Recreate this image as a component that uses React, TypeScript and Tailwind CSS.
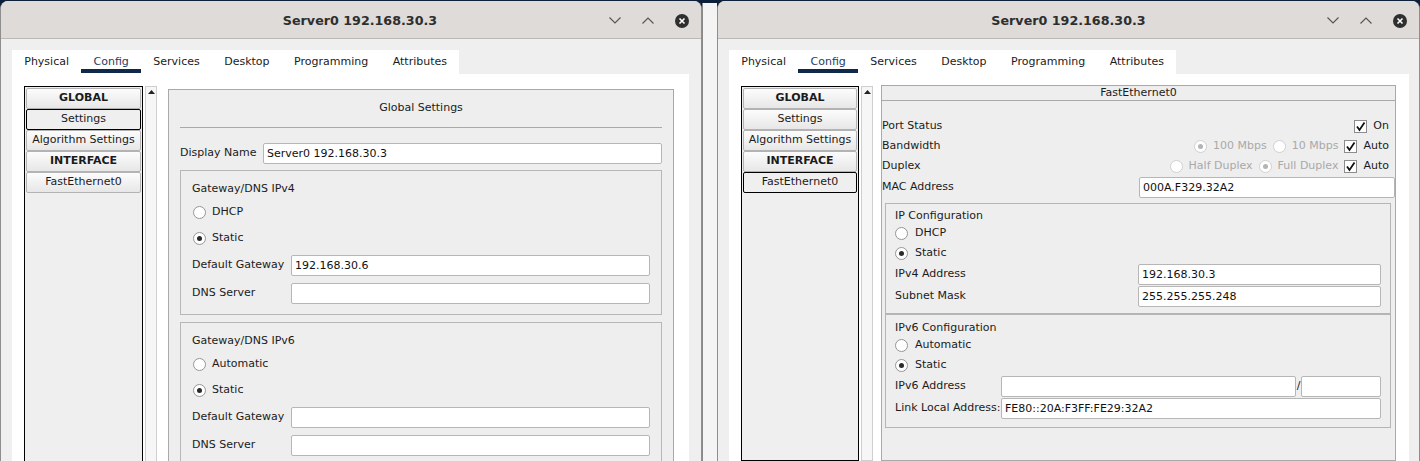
import React from "react";

type Kind = "global" | "iface";

function Radio({ checked, disabled }: { checked?: boolean; disabled?: boolean }) {
  return (
    <span
      className={`w-[13px] h-[13px] shrink-0 rounded-full border bg-white flex items-center justify-center ${
        disabled ? "border-[#d0d0d0]" : "border-[#969696]"
      }`}
    >
      {checked && (
        <span className={`w-[5px] h-[5px] rounded-full ${disabled ? "bg-[#b4b4b4]" : "bg-[#2a2a2a]"}`} />
      )}
    </span>
  );
}

function Check() {
  return (
    <span className="w-[13px] h-[13px] shrink-0 border border-[#8c8c8c] bg-white flex items-center justify-center">
      <svg width="11" height="11" viewBox="0 0 11 11">
        <path d="M2 5.5 L4.5 9 L9.5 1.5" fill="none" stroke="#111" strokeWidth="1.8" />
      </svg>
    </span>
  );
}

function Field({ value = "", className = "" }: { value?: string; className?: string }) {
  return (
    <div
      className={`h-[21px] border border-[#b6b6b6] rounded-[2px] bg-white px-[3px] leading-[19px] text-[#111] whitespace-nowrap ${className}`}
    >
      {value}
    </div>
  );
}

function SideItem({ label, bold, selected }: { label: string; bold?: boolean; selected?: boolean }) {
  return (
    <div
      className={`h-[21px] mx-[1px] flex items-center justify-center rounded-[2px] border ${
        selected ? "border-black bg-[#efefef]" : "border-[#b3b3b3] bg-gradient-to-b from-[#fcfcfc] to-[#e7e7e7]"
      } ${bold ? "font-bold" : ""}`}
    >
      {label}
    </div>
  );
}

function TitleBar({ kind }: { kind: Kind }) {
  return (
    <div
      className={`h-[38px] shrink-0 bg-[#dedbd8] border-b border-[#bcb8b4] flex items-center pt-[2px] ${
        kind === "global" ? "pl-[30px]" : "pl-[12px]"
      }`}
    >
      <div className="flex-1" />
      <span className="font-bold text-[12.7px] text-[#2e2e2e]">Server0 192.168.30.3</span>
      <div className="flex-1 flex justify-end items-center gap-[21px] pr-[12px]">
        <svg width="12" height="7" viewBox="0 0 12 7">
          <polyline points="0.5,0.5 6,6 11.5,0.5" fill="none" stroke="#555" strokeWidth="1.1" />
        </svg>
        <svg width="12" height="7" viewBox="0 0 12 7">
          <polyline points="0.5,6.5 6,1 11.5,6.5" fill="none" stroke="#555" strokeWidth="1.1" />
        </svg>
        <svg width="14" height="14" viewBox="0 0 14 14">
          <circle cx="7" cy="7" r="7" fill="#2f2f2f" />
          <path d="M4.5 4.5 L9.5 9.5 M9.5 4.5 L4.5 9.5" stroke="#fff" strokeWidth="1.6" />
        </svg>
      </div>
    </div>
  );
}

function Tabs() {
  const tabs = ["Physical", "Config", "Services", "Desktop", "Programming", "Attributes"];
  return (
    <div className="flex self-start bg-white h-[24px]">
      {tabs.map((t) => (
        <div key={t} className="relative h-full px-[12.25px] flex items-center">
          <span className={t === "Config" ? "text-[#1f3b62]" : ""}>{t}</span>
          {t === "Config" && <div className="absolute left-0 right-0 bottom-[1px] h-[4px] bg-[#10294b]" />}
        </div>
      ))}
    </div>
  );
}

function Sidebar({ kind }: { kind: Kind }) {
  return (
    <div className="flex shrink-0">
      <div className={`${kind === "global" ? "w-[119px]" : "w-[118px]"} border border-black bg-[#efefef] pt-[1px]`}>
        <SideItem label="GLOBAL" bold />
        <SideItem label="Settings" selected={kind === "global"} />
        <SideItem label="Algorithm Settings" />
        <SideItem label="INTERFACE" bold />
        <SideItem label="FastEthernet0" selected={kind === "iface"} />
      </div>
      <div className="w-[12px] ml-[2px] border border-[#cfcfcf] bg-[#f6f6f6] flex justify-center pt-[3px]">
        <svg width="7" height="4" viewBox="0 0 7 4">
          <polygon points="0,4 3.5,0 7,4" fill="#222" />
        </svg>
      </div>
    </div>
  );
}

function GatewayGroup({ title, first }: { title: string; first: string }) {
  return (
    <div className="border border-[#b7b7b7] px-[11px] pt-[11px] pb-[10px] flex flex-col">
      <div className="h-[14px] leading-[14px]">{title}</div>
      <div className="mt-[5px] h-[22px] flex items-center gap-[6px] pl-[1px]">
        <Radio />
        <span>{first}</span>
      </div>
      <div className="mt-[4px] h-[22px] flex items-center gap-[6px] pl-[1px]">
        <Radio checked />
        <span>Static</span>
      </div>
      <div className="mt-[6px] flex items-center">
        <span className="w-[99px] shrink-0">Default Gateway</span>
        <Field className="flex-1" value={title.endsWith("IPv4") ? "192.168.30.6" : ""} />
      </div>
      <div className="mt-[7px] flex items-center">
        <span className="w-[99px] shrink-0">DNS Server</span>
        <Field className="flex-1" />
      </div>
    </div>
  );
}

function GlobalPanel() {
  return (
    <div className="w-[507px] ml-[11px] mt-[3px] border border-[#a9a9a9] bg-[#eeeeee] px-[11px] pt-[11px] flex flex-col">
      <div className="h-[14px] leading-[14px] text-center">Global Settings</div>
      <div className="mt-[12px] h-px bg-[#a9a9a9]" />
      <div className="mt-[15px] flex items-center">
        <span className="w-[83px] shrink-0">Display Name</span>
        <Field className="flex-1" value="Server0 192.168.30.3" />
      </div>
      <div className="mt-[6px]">
        <GatewayGroup title="Gateway/DNS IPv4" first="DHCP" />
      </div>
      <div className="mt-[7px]">
        <GatewayGroup title="Gateway/DNS IPv6" first="Automatic" />
      </div>
    </div>
  );
}

function Opt({ label, checked, disabled }: { label: string; checked?: boolean; disabled?: boolean }) {
  return (
    <span className="flex items-center gap-[6px]">
      <Radio checked={checked} disabled={disabled} />
      <span className={disabled ? "text-[#a9a9a9]" : ""}>{label}</span>
    </span>
  );
}

function IfacePanel() {
  return (
    <div className="w-[515px] ml-[8px] mt-[-1px] border border-[#a9a9a9] bg-[#eeeeee] flex flex-col">
      <div className="h-[15px] leading-[14px] text-center border-b border-[#a9a9a9]">FastEthernet0</div>
      <div className="pt-[15px] flex flex-col">
        <div className="h-[20px] flex items-center justify-between pr-[6px]">
          <span>Port Status</span>
          <span className="flex items-center gap-[6px]">
            <Check />
            <span>On</span>
          </span>
        </div>
        <div className="h-[20px] flex items-center justify-between pr-[6px]">
          <span>Bandwidth</span>
          <span className="flex items-center gap-[6px]">
            <Opt label="100 Mbps" checked disabled />
            <Opt label="10 Mbps" disabled />
            <Check />
            <span>Auto</span>
          </span>
        </div>
        <div className="h-[20px] flex items-center justify-between pr-[6px]">
          <span>Duplex</span>
          <span className="flex items-center gap-[6px]">
            <Opt label="Half Duplex" disabled />
            <Opt label="Full Duplex" checked disabled />
            <Check />
            <span>Auto</span>
          </span>
        </div>
        <div className="mt-[1px] flex items-center">
          <span className="flex-1">MAC Address</span>
          <Field className="w-[256px]" value="000A.F329.32A2" />
        </div>
      </div>
      <div className="mt-[5px] ml-[3px] mr-[4px] border border-[#b5b5b5] px-[9px] pt-[5px] pb-[6px] flex flex-col">
        <div className="h-[14px] leading-[14px]">IP Configuration</div>
        <div className="h-[20px] flex items-center gap-[7px]">
          <Radio />
          <span>DHCP</span>
        </div>
        <div className="h-[20px] flex items-center gap-[7px]">
          <Radio checked />
          <span>Static</span>
        </div>
        <div className="mt-[1px] flex items-center">
          <span className="w-[243px] shrink-0">IPv4 Address</span>
          <Field className="flex-1" value="192.168.30.3" />
        </div>
        <div className="mt-[1px] flex items-center">
          <span className="w-[243px] shrink-0">Subnet Mask</span>
          <Field className="flex-1" value="255.255.255.248" />
        </div>
      </div>
      <div className="ml-[3px] mr-[4px] border border-[#b5b5b5] px-[9px] pt-[6px] pb-[8px] flex flex-col">
        <div className="h-[14px] leading-[14px]">IPv6 Configuration</div>
        <div className="h-[20px] flex items-center gap-[7px]">
          <Radio />
          <span>Automatic</span>
        </div>
        <div className="h-[20px] flex items-center gap-[7px]">
          <Radio checked />
          <span>Static</span>
        </div>
        <div className="mt-[1px] flex items-center">
          <span className="w-[106px] shrink-0">IPv6 Address</span>
          <Field className="flex-1" />
          <span className="w-[5px] text-center">/</span>
          <Field className="w-[80px]" />
        </div>
        <div className="mt-[1px] flex items-center">
          <span className="w-[106px] shrink-0 whitespace-nowrap">Link Local Address:</span>
          <Field className="flex-1" value="FE80::20A:F3FF:FE29:32A2" />
        </div>
      </div>
    </div>
  );
}

function Window({ kind }: { kind: Kind }) {
  return (
    <div
      className={`${kind === "global" ? "w-[702px]" : "w-[703px]"} h-[460px] mt-[1px] shrink-0 rounded-t-[8px] overflow-hidden flex flex-col bg-[#efefef] border-x border-[#8e8e8e]`}
    >
      <TitleBar kind={kind} />
      <div className={`flex-1 flex flex-col pt-[11px] pl-[11px] ${kind === "global" ? "pr-[12px]" : "pr-[10px]"}`}>
        <Tabs />
        <div className={`flex-1 bg-white flex pl-[12px] pt-[12px] ${kind === "global" ? "pr-[15px]" : "pr-[12px]"}`}>
          <Sidebar kind={kind} />
          {kind === "global" ? <GlobalPanel /> : <IfacePanel />}
        </div>
      </div>
    </div>
  );
}

export default function App() {
  return (
    <div className="w-[1420px] h-[461px] overflow-hidden bg-[#0c2039] flex font-['DejaVu_Sans',sans-serif] text-[11px] text-[#1b1b1b]">
      <Window kind="global" />
      <div className="w-[15px] mt-[3px] bg-[#f4f4f4] border-l border-[#8a8a8a]" />
      <Window kind="iface" />
    </div>
  );
}
